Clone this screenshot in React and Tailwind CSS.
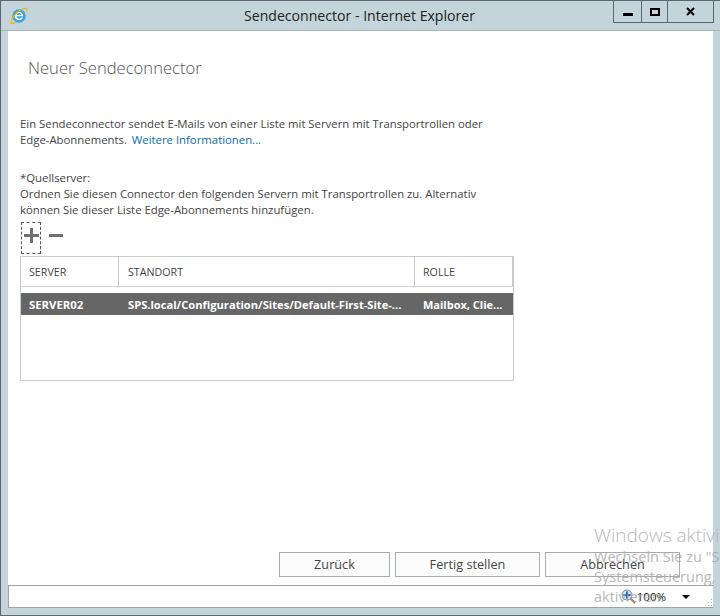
import React from 'react';

const IeIcon = () => (
  <svg width="18" height="18" viewBox="0 0 18 18" fill="none">
    <circle cx="9" cy="9" r="6.800" fill="#3fa3e0" />
    <path d="M5 8.200c.4-2.200 2-3.400 4.100-3.400 2.300 0 3.900 1.600 4 4.400H6.600c.1 1.600 1.100 2.500 2.600 2.500 1 0 1.800-.4 2.300-1.200h1.500c-.7 1.700-2.100 2.600-3.900 2.600-2.700 0-4.400-1.900-4.400-4.300z" fill="#fff" />
    <path d="M6.700 7.900h4.600c-.2-1.200-1-1.900-2.200-1.900-1.300 0-2.100.7-2.400 1.900z" fill="#3fa3e0" />
    <path d="M1.300 16.300C.3 15 1.800 11.500 5 7.800c3.400-3.800 8-6.800 10.500-6.500 1.400.2 1.500 1.500.9 3" stroke="#f2b705" strokeWidth="1.200" strokeLinecap="round" />
    <path d="M1.300 16.300c.8.700 2.300.3 4-.7" stroke="#f2b705" strokeWidth="1.200" strokeLinecap="round" />
  </svg>
);

const ZoomIcon = () => (
  <svg width="15" height="15" viewBox="0 0 15 15" fill="none">
    <path d="M9 9l5 5" stroke="#9a6a3c" strokeWidth="2" />
    <circle cx="6" cy="6" r="5" fill="#d5e4f2" stroke="#7b8a99" />
    <path d="M6 2.500v7M2.500 6h7" stroke="#1d5fc0" strokeWidth="2" />
  </svg>
);

const Grip = () => (
  <svg width="8" height="8" viewBox="0 0 8 8" fill="#a8acae">
    <rect x="6" y="0" width="1" height="1" />
    <rect x="3" y="3" width="1" height="1" />
    <rect x="6" y="3" width="1" height="1" />
    <rect x="0" y="6" width="1" height="1" />
    <rect x="3" y="6" width="1" height="1" />
    <rect x="6" y="6" width="1" height="1" />
  </svg>
);

const Button = ({ width, children }) => (
  <button className={`${width} h-[25px] border border-[#a5adad] bg-[#fcfcfc] text-[12.700px] text-[#444] flex items-center justify-center`}>
    {children}
  </button>
);

export default function App() {
  return (
    <div className="w-[720px] h-[616px] bg-[#c3d5db] border-t border-l border-b border-[#5f6670] flex flex-col relative overflow-hidden font-['Open_Sans',sans-serif] text-[#444]">
      <div className="h-[30px] flex items-start shrink-0 border-b border-[#a9b5ba]">
        <div className="w-[230px] pl-[9px] pt-[6px]">
          <IeIcon />
        </div>
        <div className="flex-1 text-center text-[14.100px] leading-[30px] text-[#222] pr-[125px]">Sendeconnector - Internet Explorer</div>
        <div className="flex h-[22px] border-l border-b border-r border-[#5f6670] mr-[6px]">
          <div className="w-[28px] border-r border-[#5f6670] flex items-center justify-center">
            <div className="w-[10px] h-[3px] bg-black mt-[5px]" />
          </div>
          <div className="w-[26px] border-r border-[#5f6670] flex items-center justify-center">
            <div className="w-[10px] h-[8px] border-2 border-black" />
          </div>
          <div className="w-[45px] flex items-center justify-center">
            <svg width="9" height="9" viewBox="0 0 9 9"><path d="M1 1l7 7M8 1l-7 7" stroke="#000" strokeWidth="2" /></svg>
          </div>
        </div>
      </div>

      <div className="flex-1 mx-[7px] mb-[7px] bg-white flex flex-col min-h-0">
        <div className="flex-1 pl-[12px] min-h-0">
          <h1 className="pl-[8px] mt-[26px] text-[16.600px] leading-[22px] font-light text-[#555]">Neuer Sendeconnector</h1>

          <p className="mt-[37px] text-[11.350px] leading-[16px] text-[#444]">
            Ein Sendeconnector sendet E-Mails von einer Liste mit Servern mit Transportrollen oder<br />
            Edge-Abonnements. <span className="ml-[2px] text-[#0a6cb5]">Weitere Informationen...</span>
          </p>

          <p className="mt-[22px] text-[11.350px] leading-[16px] text-[#444]">
            *Quellserver:<br />
            Ordnen Sie diesen Connector den folgenden Servern mit Transportrollen zu. Alternativ<br />
            können Sie dieser Liste Edge-Abonnements hinzufügen.
          </p>

          <div className="mt-[4px] flex items-start gap-[8px] pl-[1px]">
            <div className="w-[20px] h-[32px] pt-[5px] border border-dashed border-[#555] flex items-start justify-center">
              <svg width="15" height="15" viewBox="0 0 15 15"><path d="M7.500 0v15M0 7.500h15" stroke="#707070" strokeWidth="3" /></svg>
            </div>
            <div className="w-[14px] h-[3px] mt-[12px] bg-[#707070]" />
          </div>

          <div className="w-[494px] h-[125px] mt-[2px] border border-[#c6ccd0] text-[10.700px]">
            <div className="h-[30px] flex border-b border-[#d0d4d6] text-[#444]">
              <div className="w-[98px] pl-[8px] border-r border-[#c6ccd0] leading-[30px]">SERVER</div>
              <div className="w-[296px] pl-[9px] border-r border-[#c6ccd0] leading-[30px]">STANDORT</div>
              <div className="w-[98px] pl-[8px] border-r border-[#c6ccd0] leading-[30px]">ROLLE</div>
            </div>
            <div className="mt-[6px] h-[22px] flex bg-[#666] text-white font-bold leading-[23px]">
              <div className="w-[98px] pl-[8px] text-[11.350px]">SERVER02</div>
              <div className="w-[296px] pl-[9px] whitespace-nowrap text-[11.150px]">SPS.local/Configuration/Sites/Default-First-Site-...</div>
              <div className="w-[98px] pl-[8px] whitespace-nowrap text-[11px]">Mailbox, Clie...</div>
            </div>
          </div>
        </div>

        <div className="flex justify-end gap-[5px] pr-[33px] pb-[8px]">
          <Button width="w-[111px]">Zurück</Button>
          <Button width="w-[145px]">Fertig stellen</Button>
          <Button width="w-[135px]">Abbrechen</Button>
        </div>

        <div className="h-[23px] border-t border-b border-l border-[#a0a4a6] flex items-center justify-end text-[11.500px] text-[#111]">
          <div className="flex items-center pr-[15px]">
            <ZoomIcon />
            <span className="ml-[1px] mr-[16px]">100%</span>
            <div className="w-0 h-0 border-l-[4px] border-r-[4px] border-t-[4px] border-l-transparent border-r-transparent border-t-black" />
          </div>
          <div className="self-end">
            <Grip />
          </div>
        </div>
      </div>

      {/* activation watermark sits over the dialog */}
      <div className="absolute left-[593px] top-[522px] w-[127px] overflow-hidden whitespace-nowrap text-[#a8a8a8] opacity-80 pointer-events-none">
        <div className="text-[19px] leading-[24px] font-light">Windows aktivieren</div>
        <div className="text-[14.500px] leading-[20px]">Wechseln Sie zu "System</div>
        <div className="text-[14.500px] leading-[20px]">Systemsteuerung, um</div>
        <div className="text-[14.500px] leading-[20px]">aktivieren.</div>
      </div>
    </div>
  );
}
